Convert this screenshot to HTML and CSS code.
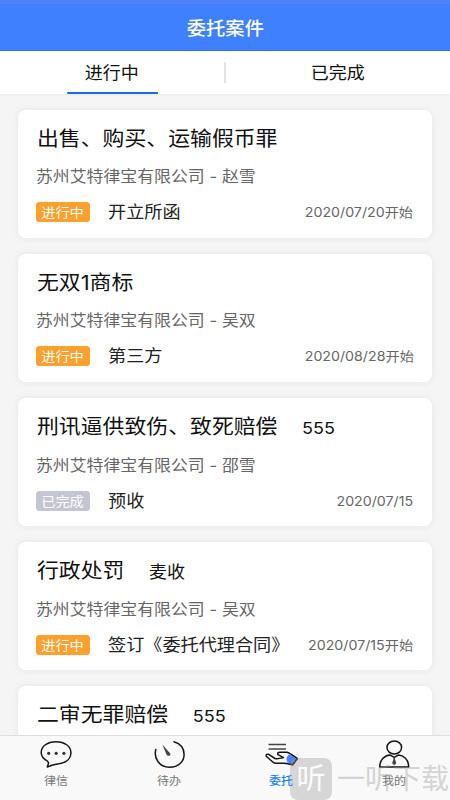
FILE: index.html
```html
<!DOCTYPE html>
<html lang="zh-CN">
<head>
<meta charset="utf-8">
<title>委托案件</title>
<link rel="stylesheet" href="styles.css">
</head>
<body>
<div class="screen">
  <header class="header"><h1 class="wide mid">委托案件</h1></header>
  <nav class="tabs">
    <div class="tab active"><span class="wide mid">进行中</span></div>
    <i class="divider"></i>
    <div class="tab"><span class="wide mid">已完成</span></div>
  </nav>
  <main class="list">
    <article class="card">
      <div class="title wide">出售、购买、运输假币罪</div>
      <div class="party wide">苏州艾特律宝有限公司 - 赵雪</div>
      <div class="row"><span class="badge"><b class="wide mid">进行中</b></span><span class="stage wide">开立所函</span><span class="date wide">2020/07/20开始</span></div>
    </article>
    <article class="card">
      <div class="title wide">无双1商标</div>
      <div class="party wide">苏州艾特律宝有限公司 - 吴双</div>
      <div class="row"><span class="badge"><b class="wide mid">进行中</b></span><span class="stage wide">第三方</span><span class="date wide">2020/08/28开始</span></div>
    </article>
    <article class="card">
      <div class="title wide">刑讯逼供致伤、致死赔偿<span class="note">555</span></div>
      <div class="party wide">苏州艾特律宝有限公司 - 邵雪</div>
      <div class="row"><span class="badge done"><b class="wide mid">已完成</b></span><span class="stage wide">预收</span><span class="date wide">2020/07/15</span></div>
    </article>
    <article class="card">
      <div class="title wide">行政处罚<span class="note">麦收</span></div>
      <div class="party wide">苏州艾特律宝有限公司 - 吴双</div>
      <div class="row"><span class="badge"><b class="wide mid">进行中</b></span><span class="stage wide">签订《委托代理合同》</span><span class="date wide">2020/07/15开始</span></div>
    </article>
    <article class="card">
      <div class="title wide">二审无罪赔偿<span class="note">555</span></div>
    </article>
  </main>
  <footer class="bar">
    <div class="item">
      <svg width="36" height="32" viewBox="0 0 36 32" fill="none" stroke="#151515" stroke-width="1.5" stroke-linejoin="round"><path d="M9.500 24.100C5.500 22 3.200 19 3.200 15.500C3.200 9.200 9.500 4.700 18 4.700S32.900 9.200 32.900 15.500C32.900 22.500 27 26.200 19.500 26.900C16 27.400 13 28.400 9.300 30L10.600 25.900Z"/><g fill="#333" stroke="none"><circle cx="10.700" cy="16.300" r="1.600"/><circle cx="18.200" cy="16.300" r="1.600"/><circle cx="25.900" cy="16.300" r="1.600"/></g></svg>
      <span class="wide mid">律信</span>
    </div>
    <div class="item">
      <svg width="36" height="32" viewBox="0 0 36 32" fill="none" stroke="#151515" stroke-width="1.500" stroke-linecap="round"><path d="M4.800 12.600C2.600 21 8 30.200 18.500 30.200C27.500 30.200 33.100 24.500 33.100 17.500C33.100 11 29 6.500 23 4.700"/><path d="M11.300 7.600L19.200 16.500Q20 18.900 17.300 18.800Q15.700 18.300 15.300 16.900Z" fill="#444" stroke="none"/></svg>
      <span class="wide mid">待办</span>
    </div>
    <div class="item current">
      <svg width="36" height="32" viewBox="0 0 36 32" fill="none" stroke="#151515" stroke-width="1.500" stroke-linejoin="round"><path d="M5.500 7.500H23M5.500 12H23" stroke="#444"/><path d="M26.500 16.200L30.500 19.800L34.300 21.600L29.600 27.900Q25 26.300 20.500 26.300H13Q11.300 26.200 10 25.200L3.300 19.200Q2.700 17 5.200 17.200L12 21.500Q14.500 22.200 20.500 20.600L15 17.700Q13.800 15.500 17 15.200H24Z"/><path d="M27.500 16.800L34.500 21.500L29.800 27.300Q24 27 23.400 22Q24 18 27.500 16.800Z" fill="#4d82f7" stroke="none"/><path d="M28 17L34.300 21.500L29.700 27.800L26.500 26.900"/></svg>
      <span class="wide mid">委托</span>
    </div>
    <div class="item">
      <svg width="36" height="32" viewBox="0 0 36 32" fill="none" stroke="#151515" stroke-width="1.500" stroke-linejoin="round"><ellipse cx="18.300" cy="10.500" rx="7.300" ry="6.500"/><path d="M3.700 30H32.700C32.700 22.500 27.500 18.400 22.300 18.100L18.200 20.400L14.200 18.100C8.500 18.400 3.700 23 3.700 30Z"/><path d="M17 20H19.400L18.900 22L20.300 26.200L18.200 28.200L16.100 26.200L17.500 22Z" fill="#444" stroke="none"/></svg>
      <span class="wide mid">我的</span>
    </div>
  </footer>
  <div class="mark">
    <div class="logo"><span>听</span></div><span class="brand">一听下载</span>
  </div>
</div>
</body>
</html>
```

FILE: styles.css
```css
* { box-sizing: border-box; }
body { margin: 0; font-family: Inter, "Noto Sans CJK SC", sans-serif; }
.screen {
  position: relative;
  width: 450px;
  height: 800px;
  overflow: hidden;
  display: flex;
  flex-direction: column;
  background: #f5f5f5;
  color: #111;
}
.wide { transform: scaleX(1.093); transform-origin: left center; white-space: nowrap; }
.mid { transform-origin: center; }
.header {
  flex: none;
  height: 51px;
  padding: 3px 0 0;
  display: flex;
  align-items: center;
  justify-content: center;
  background: #3f80ff;
  border-top: 4px solid #5182f7;
  border-bottom: 1px solid #2f70e4;
  color: #fff;
}
.header h1 { margin: 0; font-size: 17.700px; line-height: 24px; font-weight: 500; }
.tabs {
  flex: none;
  height: 43px;
  display: flex;
  align-items: center;
  background: #fff;
  box-shadow: 0 1px 2px #0000000d;
  font-size: 16.500px;
}
.tab { flex: 1; height: 43px; display: flex; justify-content: center; line-height: 44px; }
.active span { position: relative; height: 43px; }
.active span::after {
  content: "";
  position: absolute;
  left: 50%;
  bottom: 0;
  width: 82.500px;
  height: 2px;
  margin-left: -40.500px;
  background: #1668f5;
}
.divider { width: 2px; height: 21px; background: #e2e2e2; }
.list {
  flex: 1;
  min-height: 0;
  overflow: hidden;
  padding: 16px 18px 0;
  display: flex;
  flex-direction: column;
  gap: 16px;
}
.card {
  flex: none;
  height: 128px;
  padding: 16px 18.500px 0 18px;
  border-radius: 8px;
  background: #fff;
  box-shadow: 0 0 9px #00000012;
}
.title { margin-left: .5px; font-size: 20px; line-height: 26px; width: max-content; }
.note { margin-left: 22.500px; font-size: 16.500px; }
.party { margin-top: 14px; font-size: 15.450px; line-height: 22px; width: max-content; color: #666; }
.row { margin-top: 13px; height: 22px; display: flex; align-items: center; }
.badge {
  width: 54px;
  height: 20px;
  display: flex;
  align-items: center;
  justify-content: center;
  border-radius: 3.500px;
  background: #ffa02d;
  color: #fff;
}
.badge b { font-size: 13px; line-height: 20px; font-weight: 400; }
.done { background: #c3c6d2; }
.stage { margin-left: 17.500px; font-size: 16.600px; line-height: 22px; color: #222; }
.date { margin-left: auto; transform-origin: right center; font-size: 13px; line-height: 22px; color: #666; }
.bar {
  flex: none;
  height: 65px;
  display: flex;
  background: #f9f9f9;
  border-top: 1px solid #dedede;
}
.item { flex: 1; display: flex; flex-direction: column; align-items: center; font-size: 11px; color: #777; }
.item svg { flex: none; margin-top: 1px; }
.item span { margin-top: 3.500px; line-height: 16px; }
.current { color: #1683fb; font-weight: 500; }
.mark {
  position: absolute;
  left: 290px;
  top: 758px;
  display: flex;
  align-items: center;
  gap: 5px;
  opacity: .38;
}
.logo {
  width: 42px;
  height: 42px;
  border-radius: 8px;
  background: #a0a0a0;
  color: #fff;
  display: flex;
  align-items: center;
  justify-content: center;
  font-size: 29px;
  line-height: 40px;
}
.brand { font-size: 28px; line-height: 40px; font-weight: 400; color: #999; white-space: nowrap; }
```
